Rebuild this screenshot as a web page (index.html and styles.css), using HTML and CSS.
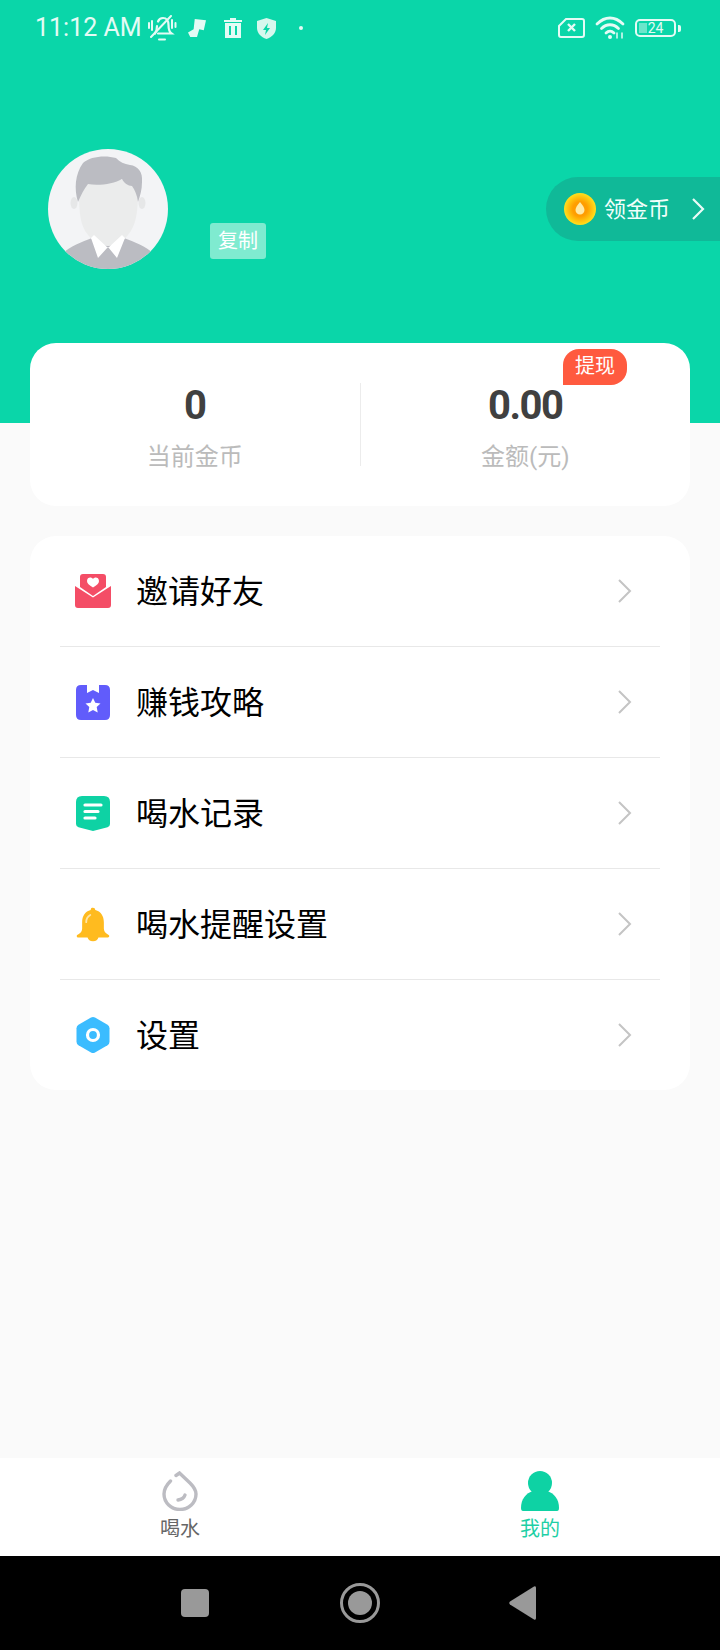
FILE: index.html
```html
<!DOCTYPE html>
<html lang="zh">
<head>
<meta charset="utf-8">
<title>我的</title>
<link rel="stylesheet" href="styles.css">
</head>
<body>
<div class="page">
  <header class="hero">
    <div class="status">
      <span class="time">11:12 AM</span>
      <svg class="st-bell" viewBox="0 0 30 26" fill="none" stroke="#e4fbf5" stroke-width="2.200" stroke-linecap="round"><path d="M8 18.500c1.500-2 2-4 2-7.500M11 6.500C12 4 14 3 16 3c3.500 0 5.500 3 5.500 7 0 4 1 7 3 8.500H11"/><path d="M4 22 24 1M12 24.500h6M2 8v5M5 6v9M25 5v8M28.500 8v4" stroke-width="2"/></svg>
      <svg class="st-tool" viewBox="0 0 16 16" fill="#e4fbf5"><path d="M6 0l10 1-2 9-4-1-2 7-6 0-2-4 5-3z"/></svg>
      <svg class="st-trash" viewBox="0 0 18 20" fill="#e4fbf5"><path d="M6 0h6v2h6v2H0V2h6zM1 5h16v15H1zm4 3v9h2V8zm6 0v9h2V8z" fill-rule="evenodd"/></svg>
      <svg class="st-shield" viewBox="0 0 19 21" fill="#d6f8ee"><path d="M9.500 0 19 3v7c0 5-4 9-9.500 11C4 19 0 15 0 10V3zM11 5l-5 7h3l-1 5 5-7h-3z" fill-rule="evenodd"/></svg>
      <span class="st-dot"></span>
      <span class="st-gap"></span>
      <svg class="st-sim" viewBox="0 0 27 20" fill="none" stroke="#e4fbf5" stroke-width="2"><path d="M8 1h16q2 0 2 2v14q0 2-2 2H3q-2 0-2-2V8z"/><path d="m10 6 7 7m0-7-7 7" stroke-width="2.400"/></svg>
      <svg class="st-wifi" viewBox="0 0 30 24" fill="none" stroke="#e4fbf5" stroke-width="2.800" stroke-linecap="round"><path d="M2 8c8-8 18-8 26 0M6.500 12.500c5-5 12-5 17 0M11 17c2.500-2.500 5.500-2.500 8 0"/><circle cx="15" cy="21" r="2" fill="#e4fbf5" stroke="none"/><path d="M22 22v-5M27 17v5" stroke-width="1.500"/></svg>
      <div class="st-batt"><span class="st-level"></span><span class="st-num">24</span></div>
      <span class="st-nub"></span>
    </div>
    <div class="profile">
      <svg class="avatar" viewBox="0 0 120 120">
        <defs><clipPath id="avatar-clip"><circle cx="60" cy="60" r="60"/></clipPath></defs>
        <g clip-path="url(#avatar-clip)">
          <rect width="120" height="120" fill="#f3f4f6"/>
          <path d="M14 120v-15c8-8 20-12 30-16h32c10 4 22 8 30 16v15z" fill="#bbbcc2"/>
          <ellipse cx="26" cy="54" rx="3.500" ry="6" fill="#e6e7e8"/>
          <ellipse cx="94" cy="54" rx="3.500" ry="6" fill="#e6e7e8"/>
          <path d="M31 40c0 24 1 36 9 46 7 8 11 11 20 11s14-4 20-11c8-10 10-22 10-46 0-12-58-16-59 0z" fill="#ebecec"/>
          <path d="M30 53C26 40 27 25 35 14 42 7 58 6 68 9c4 4 8 6 14 7 8 1 13 7 12 17 0 8-2 14-4 20-1-7-3-12-6-16-4 0-8-3-10-7-8 5-24 7-34 5-4 5-7 11-10 18z" fill="#bbbcc2"/>
          <path d="m43 89 7 20 10-11 9 11 8-20-3-3-14 13-14-13z" fill="#fff"/>
        </g>
      </svg>
      <span class="copy">复制</span>
      <div class="coins">
        <svg class="coin" viewBox="0 0 32 32">
          <defs><radialGradient id="coin-grad"><stop offset="0.45" stop-color="#ff9d00"/><stop offset="0.75" stop-color="#ffc20e"/><stop offset="1" stop-color="#ffe01e"/></radialGradient></defs>
          <circle cx="16" cy="16" r="16" fill="url(#coin-grad)"/>
          <path d="M16 9c3 3.500 4.500 6 4.500 8a4.500 4.500 0 0 1-9 0c0-2 1.500-4.500 4.500-8z" fill="#ffe9a6"/>
        </svg>
        <span class="coins-label">领金币</span>
        <svg class="coins-arrow" viewBox="0 0 14 24" fill="none" stroke="#e9fbf7" stroke-width="2.200"><path d="m2 2 10 10L2 22"/></svg>
      </div>
    </div>
  </header>

  <main class="main">
    <section class="stats">
      <div class="stat">
        <div class="stat-value">0</div>
        <div class="stat-label">当前金币</div>
      </div>
      <div class="stat-line"></div>
      <div class="stat">
        <div class="stat-value">0.00</div>
        <div class="stat-label">金额(元)</div>
      </div>
      <span class="withdraw">提现</span>
    </section>

    <section class="menu">
      <div class="row">
        <svg class="row-icon" viewBox="0 0 38 38">
          <path d="M6 5q0-3 3-3h20q3 0 3 3v10l-13 9-13-9z" fill="#f44d66"/>
          <path d="M19 15.500c-4-2.500-6-4-6-6.500 0-4 4.500-4.500 6-2 1.500-2.500 6-2 6 2 0 2.500-2 4-6 6.500z" fill="#fff"/>
          <path d="m1 14 18 11.500L37 14v19q0 3-3 3H4q-3 0-3-3z" fill="#f44d66"/>
        </svg>
        <span class="row-label">邀请好友</span>
        <svg class="row-arrow" viewBox="0 0 15 24" fill="none" stroke="#c4c4c4" stroke-width="2"><path d="m2 1 11 11L2 23"/></svg>
      </div>
      <div class="row">
        <svg class="row-icon" viewBox="0 0 38 38">
          <path d="M7 2h6v8l6-3 6 3V2h6q5 0 5 5v25q0 5-5 5H7q-5 0-5-5V7q0-5 5-5z" fill="#615cfb"/>
          <path d="m19 15 2.300 4.800 5.200.7-3.800 3.600 1 5.300-4.700-2.500-4.700 2.500 1-5.300-3.800-3.600 5.200-.7z" fill="#fff"/>
        </svg>
        <span class="row-label">赚钱攻略</span>
        <svg class="row-arrow" viewBox="0 0 15 24" fill="none" stroke="#c4c4c4" stroke-width="2"><path d="m2 1 11 11L2 23"/></svg>
      </div>
      <div class="row">
        <svg class="row-icon" viewBox="0 0 38 38">
          <path d="M8 2h22q6 0 6 6v22q0 2.500-2.500 3.200L19 37 4.500 33.200Q2 32.500 2 30V8q0-6 6-6z" fill="#0ed2a4"/>
          <path d="M11 11h16M11 17.500h13M11 24h10" stroke="#fff" stroke-width="3.200" stroke-linecap="round"/>
        </svg>
        <span class="row-label">喝水记录</span>
        <svg class="row-arrow" viewBox="0 0 15 24" fill="none" stroke="#c4c4c4" stroke-width="2"><path d="m2 1 11 11L2 23"/></svg>
      </div>
      <div class="row">
        <svg class="row-icon" viewBox="-2 -1 42 40">
          <path d="M19 1q2.300 0 2.600 2.500C27.500 5 31 10 31 17v7c0 3 1.500 5 4.500 6.500q1.500.5 1.500 1.800T35.500 34H25q-1 4-6 4t-6-4H2.500Q1 34 1 32.300T2.500 30.500C5.500 29 7 27 7 24v-7C7 10 10.500 5 16.400 3.500 16.700 1 17.500 1 19 1z" fill="#ffbb1f"/>
          <path d="M11.500 17c0-4 1.800-6.500 4.500-8" fill="none" stroke="#ffe6a6" stroke-width="2" stroke-linecap="round"/>
        </svg>
        <span class="row-label">喝水提醒设置</span>
        <svg class="row-arrow" viewBox="0 0 15 24" fill="none" stroke="#c4c4c4" stroke-width="2"><path d="m2 1 11 11L2 23"/></svg>
      </div>
      <div class="row">
        <svg class="row-icon" viewBox="0 0 38 38">
          <path d="M17 1.500q2-1 4 0l12.500 7.200q2 1.200 2 3.500v13.600q0 2.300-2 3.500L21 36.500q-2 1-4 0L4.500 29.300q-2-1.200-2-3.500V12.200q0-2.300 2-3.500z" fill="#3bbcff"/>
          <circle cx="19" cy="19" r="5.500" fill="none" stroke="#fff" stroke-width="3.200"/>
        </svg>
        <span class="row-label">设置</span>
        <svg class="row-arrow" viewBox="0 0 15 24" fill="none" stroke="#c4c4c4" stroke-width="2"><path d="m2 1 11 11L2 23"/></svg>
      </div>
    </section>
  </main>

  <nav class="tabs">
    <div class="tab">
      <svg class="tab-icon" viewBox="0 0 36 40" fill="none" stroke="#bcbcc2" stroke-width="3.400" stroke-linecap="round"><path d="M14 4.500 17.500 2 28 12c4 4 6 7 6 11a16 15.500 0 0 1-32 0c0-5 3-9.500 6.500-13"/><path d="M16 29c3.500-.5 6-2 7-5"/></svg>
      <span class="tab-text">喝水</span>
    </div>
    <div class="tab tab-on">
      <svg class="tab-icon tab-me" viewBox="0 0 38 40" fill="#0ed2a4"><circle cx="19" cy="12" r="12"/><path d="M0 37c0-9 5-15 12-17h14c7 2 12 8 12 17q0 3-2 3H2q-2 0-2-3z"/></svg>
      <span class="tab-text">我的</span>
    </div>
  </nav>

  <footer class="sysnav">
    <span class="sys-square"></span>
    <span class="sys-circle"><span class="sys-core"></span></span>
    <svg class="sys-back" viewBox="0 0 27 34"><path d="M25 .5q2-1 2 1.500v30q0 2.500-2 1.500L1 18.500q-1.500-1.500 0-3z" fill="#999"/></svg>
  </footer>
</div>
</body>
</html>
```
FILE: styles.css
```css
* { box-sizing: border-box; }
html, body { margin: 0; padding: 0; }
body { font-family: "Roboto", "Noto Sans CJK SC", sans-serif; background: #fafafa; }
.page { width: 720px; height: 1650px; display: flex; flex-direction: column; overflow: hidden; }

.hero { height: 423px; flex: none; background: #0ad6a9; }
.status { height: 56px; display: flex; align-items: center; padding: 0 39px 0 35px; color: #e4fbf5; }
.time { font-size: 25px; line-height: 58px; width: 112px; flex: none; }
.st-bell { width: 30px; height: 26px; margin-right: 11px; }
.st-tool { width: 18px; height: 18px; margin-right: 18px; }
.st-trash { width: 18px; height: 20px; margin-right: 15px; }
.st-shield { width: 19px; height: 21px; margin-right: 23px; }
.st-dot { width: 4px; height: 4px; border-radius: 50%; background: #e4fbf5; }
.st-gap { flex: 1; }
.st-sim { width: 27px; height: 20px; margin-right: 10px; }
.st-wifi { width: 30px; height: 24px; margin-right: 10px; }
.st-batt { position: relative; width: 41px; height: 18px; border: 2px solid #e4fbf5; border-radius: 5px; display: flex; align-items: center; justify-content: center; }
.st-level { position: absolute; left: 2px; top: 2px; bottom: 2px; width: 8px; background: rgba(228, 251, 245, .45); }
.st-num { position: relative; font-size: 14px; line-height: 14px; color: #e4fbf5; }
.st-nub { width: 3px; height: 7px; margin-left: 2px; border-radius: 0 2px 2px 0; background: #e4fbf5; }

.profile { display: flex; align-items: flex-start; margin-top: 93px; padding-left: 48px; }
.avatar { width: 120px; height: 120px; flex: none; }
.copy { width: 56px; height: 36px; margin: 74px 0 0 42px; border-radius: 3px; background: #7febd0; color: #fff; font-size: 20px; line-height: 36px; text-align: center; }
.coins { margin: 28px 0 0 auto; width: 174px; height: 64px; display: flex; align-items: center; padding-left: 18px; background: #10b998; border-radius: 32px 0 0 32px; }
.coin { width: 32px; height: 32px; flex: none; }
.coins-label { margin-left: 8px; width: 66px; padding-top: 2px; font-size: 22px; line-height: 28px; color: #f2fffb; white-space: nowrap; }
.coins-arrow { width: 14px; height: 24px; margin-left: 21px; }

.main { flex: 1; padding: 0 30px; }
.stats { position: relative; height: 163px; margin-top: -80px; display: flex; align-items: flex-start; background: #fff; border-radius: 26px; padding-top: 40px; }
.stat { flex: 1; text-align: center; }
.stat-value { font-family: "Roboto", sans-serif; font-weight: 700; font-size: 40px; line-height: 42px; letter-spacing: -1.500px; padding-top: 2px; color: #404040; }
.stat-label { margin-top: 13px; font-size: 24px; line-height: 34px; color: #bbb; }
.stat-line { width: 1px; height: 83px; background: #ececec; }
.withdraw { position: absolute; top: 6px; left: 533px; width: 64px; height: 36px; border-radius: 16px 16px 16px 0; background: #ff5a3f; color: #fff; font-size: 20px; line-height: 35px; text-align: center; }

.menu { height: 554px; margin-top: 30px; padding: 0 30px; display: flex; flex-direction: column; background: #fff; border-radius: 26px; }
.row { flex: 1; display: flex; align-items: center; padding: 0 28px 0 14px; border-bottom: 1px solid #e8e8e8; }
.row:last-child { border-bottom: none; }
.row-icon { width: 38px; height: 38px; flex: none; }
.row-label { margin-left: 24px; flex: 1; padding-top: 1px; font-size: 32px; line-height: 44px; color: #000; }
.row-arrow { width: 15px; height: 24px; flex: none; margin-left: -1px; }

.tabs { height: 98px; flex: none; display: flex; background: #fff; }
.tab { flex: 1; display: flex; flex-direction: column; align-items: center; padding-top: 13px; }
.tab-icon { width: 36px; height: 40px; }
.tab-me { width: 38px; }
.tab-text { margin-top: 3px; font-size: 20px; line-height: 30px; color: #666; }
.tab-on .tab-text { color: #1ecfa5; }

.sysnav { height: 94px; flex: none; display: flex; align-items: center; padding-left: 181px; background: #000; }
.sys-square { width: 28px; height: 28px; border-radius: 4px; background: #999; }
.sys-circle { width: 40px; height: 40px; margin-left: 131px; border: 3px solid #999; border-radius: 50%; display: flex; align-items: center; justify-content: center; }
.sys-core { width: 24px; height: 24px; border-radius: 50%; background: #999; }
.sys-back { width: 27px; height: 34px; margin-left: 129px; }
```
